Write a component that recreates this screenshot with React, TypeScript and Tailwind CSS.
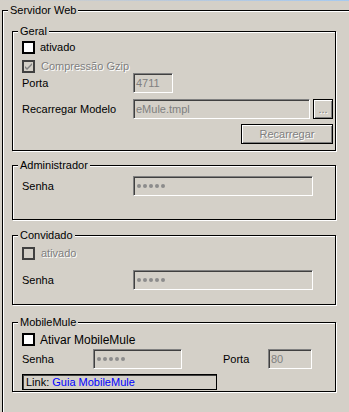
import type { ReactNode } from 'react';

const FONT = "font-['Liberation_Sans',Arial,sans-serif]";
const disabledText = 'text-[#808080] [text-shadow:1px_1px_0_#fff]';

function Group({ title, className, children }: { title: string; className: string; children?: ReactNode }) {
  return (
    <div
      className={`relative w-[324px] border border-black shadow-[1px_1px_0_#fff,inset_1px_1px_0_#fff] flex flex-col ${className}`}
    >
      <span className="absolute -top-[7px] left-[5px] bg-[#d4d0c8] px-[2px] leading-[13px]">{title}</span>
      {children}
    </div>
  );
}

function Checkbox({ checked, disabled }: { checked?: boolean; disabled?: boolean }) {
  return (
    <span
      className={`w-[13px] h-[13px] shrink-0 border-2 flex items-center justify-center ${
        disabled ? 'border-[#404040] bg-[#d4d0c8]' : 'border-black bg-white'
      }`}
    >
      {checked && (
        <svg width="9" height="9" viewBox="0 0 9 9">
          <path d="M1 4 L3 6 L8 1 L8 3 L3 8 L1 6 Z" fill="#808080" />
        </svg>
      )}
    </span>
  );
}

function Field({ w, value }: { w: string; value?: string }) {
  return (
    <div
      className={`${w} h-[20px] border border-t-[#808080] border-l-[#808080] border-r-white border-b-white shadow-[inset_1px_1px_0_#404040] flex items-center pl-[2px] text-[#808080] leading-none`}
    >
      {value}
    </div>
  );
}

function Dots({ w }: { w: string }) {
  return (
    <div
      className={`${w} h-[20px] border border-t-[#808080] border-l-[#808080] border-r-white border-b-white shadow-[inset_1px_1px_0_#404040] flex items-center gap-[2px] pl-[3px]`}
    >
      {[0, 1, 2, 3, 4].map((i) => (
        <span key={i} className="w-[4px] h-[4px] rounded-full bg-[#8c8c8c]" />
      ))}
    </div>
  );
}

function Button({ w, label }: { w: string; label: string }) {
  return (
    <div
      className={`${w} h-[20px] border border-black shadow-[inset_1px_1px_0_#fff,inset_-1px_-1px_0_#808080] flex items-center justify-center ${disabledText}`}
    >
      {label}
    </div>
  );
}

export default function App() {
  return (
    <div className={`w-[349px] h-[412px] overflow-hidden bg-[#d4d0c8] text-[11px] text-black ${FONT}`}>
      <div className="h-[1px] bg-gradient-to-r from-[#d4d0c8] via-[#b9c9dc] to-[#a6caf0]" />
      <div className="relative mt-[9px] ml-[2px] w-[400px] h-[420px] border-l border-t border-black shadow-[inset_1px_1px_0_#fff] pl-[9px] pt-[20px]">
        <span className="absolute -top-[7px] left-[5px] bg-[#d4d0c8] px-[2px] leading-[13px]">Servidor Web</span>

        <Group title="Geral" className="h-[120px]">
          <div className="mt-[9px] h-[13px] pl-[9px] flex items-center gap-[5px]">
            <Checkbox />
            <span>ativado</span>
          </div>
          <div className="mt-[6px] h-[13px] pl-[9px] flex items-center gap-[6px]">
            <Checkbox checked disabled />
            <span className={disabledText}>Compressão Gzip</span>
          </div>
          <div className="h-[20px] pl-[9px] flex items-center">
            <span className="w-[111px]">Porta</span>
            <Field w="w-[40px]" value="4711" />
          </div>
          <div className="mt-[6px] h-[20px] pl-[9px] flex items-center">
            <span className="w-[111px]">Recarregar Modelo</span>
            <Field w="w-[177px]" value="eMule.tmpl" />
            <div className="ml-[3px]">
              <Button w="w-[20px]" label="..." />
            </div>
          </div>
          <div className="mt-[5px] pr-[2px] flex justify-end">
            <Button w="w-[92px]" label="Recarregar" />
          </div>
        </Group>

        <Group title="Administrador" className="mt-[14px] h-[55px]">
          <div className="mt-[10px] h-[20px] pl-[9px] flex items-center">
            <span className="w-[111px]">Senha</span>
            <Dots w="w-[180px]" />
          </div>
        </Group>

        <Group title="Convidado" className="mt-[15px] h-[70px]">
          <div className="mt-[11px] h-[13px] pl-[9px] flex items-center gap-[6px]">
            <Checkbox disabled />
            <span className={disabledText}>ativado</span>
          </div>
          <div className="mt-[10px] h-[20px] pl-[9px] flex items-center">
            <span className="w-[111px]">Senha</span>
            <Dots w="w-[180px]" />
          </div>
        </Group>

        <Group title="MobileMule" className="mt-[17px] h-[70px]">
          <div className="mt-[10px] h-[13px] pl-[9px] flex items-center gap-[5px] text-[12px]">
            <Checkbox />
            <span>Ativar MobileMule</span>
          </div>
          <div className="mt-[3px] h-[20px] pl-[9px] flex items-center">
            <span className="w-[71px]">Senha</span>
            <Dots w="w-[89px]" />
            <span className="ml-[41px] w-[45px]">Porta</span>
            <Field w="w-[44px]" value="80" />
          </div>
          <div className="mt-[5px] ml-[9px] w-[195px] h-[16px] border border-black shadow-[inset_1px_1px_0_#404040] flex items-center pl-[3px] leading-none">
            <span>Link:&nbsp;</span>
            <span className="text-[#0000ff]">Guia MobileMule</span>
          </div>
        </Group>
      </div>
    </div>
  );
}
